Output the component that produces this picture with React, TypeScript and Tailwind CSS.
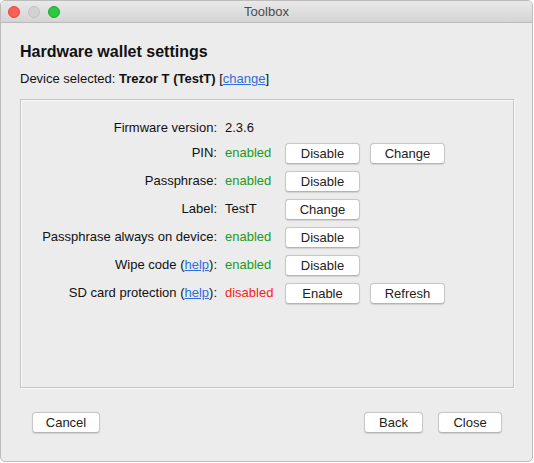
import React from "react";

const font = { fontFamily: '"Liberation Sans", Arial, sans-serif' };

type Row = {
  label: React.ReactNode;
  value: string;
  tone?: "on" | "off";
  buttons: string[];
};

function HelpLink() {
  return <span className="text-[#2c6fdc] underline">help</span>;
}

const rows: Row[] = [
  { label: "Firmware version:", value: "2.3.6", buttons: [] },
  { label: "PIN:", value: "enabled", tone: "on", buttons: ["Disable", "Change"] },
  { label: "Passphrase:", value: "enabled", tone: "on", buttons: ["Disable"] },
  { label: "Label:", value: "TestT", buttons: ["Change"] },
  { label: "Passphrase always on device:", value: "enabled", tone: "on", buttons: ["Disable"] },
  {
    label: (
      <>
        Wipe code (<HelpLink />):
      </>
    ),
    value: "enabled",
    tone: "on",
    buttons: ["Disable"],
  },
  {
    label: (
      <>
        SD card protection (<HelpLink />):
      </>
    ),
    value: "disabled",
    tone: "off",
    buttons: ["Enable", "Refresh"],
  },
];

function MacButton({ children, className = "" }: { children: React.ReactNode; className?: string }) {
  return (
    <button
      className={`flex h-[21px] items-center justify-center rounded-[4px] border border-[#c8c8c8] border-b-[#b4b4b4] bg-white text-[13px] leading-none text-[#222] shadow-[0_0.5px_1px_rgba(0,0,0,0.12)] ${className}`}
    >
      {children}
    </button>
  );
}

export default function App() {
  return (
    <div className="h-[463px] w-[534px] bg-white" style={font}>
      <div className="flex h-[462px] w-[533px] flex-col overflow-hidden rounded-[5px] border border-[#bcbcbc] bg-[#ececec] text-[#111]">
        {/* title bar */}
        <div className="relative flex h-[22px] shrink-0 items-center gap-[8px] border-b border-[#b9b9b9] bg-gradient-to-b from-[#e9e9e9] to-[#d4d4d4] pl-[7px]">
          <span className="h-[12px] w-[12px] rounded-full border border-[#e2463f] bg-[#fd5f57]" />
          <span className="h-[12px] w-[12px] rounded-full border border-[#c2c2c2] bg-[#d2d2d2]" />
          <span className="h-[12px] w-[12px] rounded-full border border-[#1fa72f] bg-[#2ac940]" />
          <span className="absolute inset-0 flex items-center justify-center text-[13px] text-[#4b4b4b]">
            Toolbox
          </span>
        </div>

        {/* content */}
        <div className="flex flex-1 flex-col pl-[19px]">
          <h1 className="mt-[19px] text-[16px] leading-[20px] font-bold">Hardware wallet settings</h1>
          <p className="mt-[9px] text-[13px] leading-[16px]">
            Device selected: <span className="font-bold">Trezor T (TestT)</span> [
            <span className="text-[#2c6fdc] underline">change</span>]
          </p>

          <div className="mt-[12px] h-[289px] w-[494px] border border-[#c4c4c4] shadow-[inset_1px_1px_0_#fafafa,1px_1px_0_#fafafa]">
            <div className="flex flex-col gap-[6px] pt-[20px] text-[13px]">
              {rows.map((row, i) => (
                <div key={i} className={`flex items-center ${row.buttons.length ? "h-[22px]" : "h-[16px]"}`}>
                  <span className="w-[196px] text-right">{row.label}</span>
                  <span
                    className={`ml-[8px] w-[52px] ${
                      row.tone === "on" ? "text-[#1f9a14]" : row.tone === "off" ? "text-[#fb1c1c]" : ""
                    }`}
                  >
                    {row.value}
                  </span>
                  {row.buttons.map((b, j) => (
                    <MacButton key={b} className={`w-[75px] ${j === 0 ? "ml-[8px]" : "ml-[10px]"}`}>
                      {b}
                    </MacButton>
                  ))}
                </div>
              ))}
            </div>
          </div>

          {/* footer */}
          <div className="mt-[24px] flex items-center pr-[30px] pl-[12px]">
            <MacButton className="w-[68px]">Cancel</MacButton>
            <div className="ml-auto flex gap-[15px]">
              <MacButton className="w-[59px]">Back</MacButton>
              <MacButton className="w-[64px]">Close</MacButton>
            </div>
          </div>
        </div>
      </div>
    </div>
  );
}
